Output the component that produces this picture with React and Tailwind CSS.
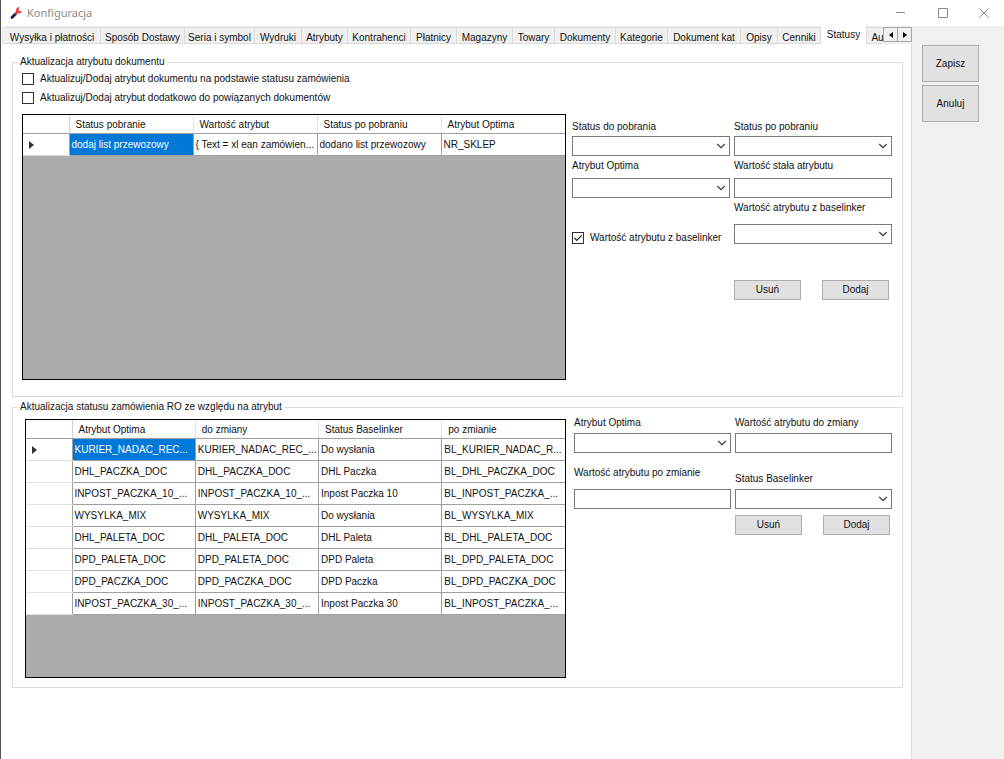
import { useState } from 'react';
import { ChevronDown } from 'lucide-react';

const tabs = [
  { name: 'Wysyłka i płatności', width: 'w-[97px]' },
  { name: 'Sposób Dostawy', width: 'w-[84px]' },
  { name: 'Seria i symbol', width: 'w-[70px]' },
  { name: 'Wydruki', width: 'w-[47px]' },
  { name: 'Atrybuty', width: 'w-[46px]' },
  { name: 'Kontrahenci', width: 'w-[63px]' },
  { name: 'Płatnicy', width: 'w-[46px]' },
  { name: 'Magazyny', width: 'w-[56px]' },
  { name: 'Towary', width: 'w-[42px]' },
  { name: 'Dokumenty', width: 'w-[61px]' },
  { name: 'Kategorie', width: 'w-[52px]' },
  { name: 'Dokument kat', width: 'w-[73px]' },
  { name: 'Opisy', width: 'w-[37px]' },
  { name: 'Cenniki', width: 'w-[43px]' },
  { name: 'Statusy', width: 'w-[46px]' },
  { name: 'Au', width: 'w-[22px]' },
];

const documentColumns = ['Status pobranie', 'Wartość atrybut', 'Status po pobraniu', 'Atrybut Optima'];
const documentRows = [
  ['dodaj list przewozowy', '{ Text = xl ean zamówien...', 'dodano list przewozowy', 'NR_SKLEP'],
];

const orderColumns = ['Atrybut Optima', 'do zmiany', 'Status Baselinker', 'po zmianie'];
const orderRows = [
  ['KURIER_NADAC_REC...', 'KURIER_NADAC_REC_...', 'Do wysłania', 'BL_KURIER_NADAC_R...'],
  ['DHL_PACZKA_DOC', 'DHL_PACZKA_DOC', 'DHL Paczka', 'BL_DHL_PACZKA_DOC'],
  ['INPOST_PACZKA_10_...', 'INPOST_PACZKA_10_...', 'Inpost Paczka 10', 'BL_INPOST_PACZKA_...'],
  ['WYSYLKA_MIX', 'WYSYLKA_MIX', 'Do wysłania', 'BL_WYSYLKA_MIX'],
  ['DHL_PALETA_DOC', 'DHL_PALETA_DOC', 'DHL Paleta', 'BL_DHL_PALETA_DOC'],
  ['DPD_PALETA_DOC', 'DPD_PALETA_DOC', 'DPD Paleta', 'BL_DPD_PALETA_DOC'],
  ['DPD_PACZKA_DOC', 'DPD_PACZKA_DOC', 'DPD Paczka', 'BL_DPD_PACZKA_DOC'],
  ['INPOST_PACZKA_30_...', 'INPOST_PACZKA_30_...', 'Inpost Paczka 30', 'BL_INPOST_PACZKA_...'],
];

function TitleBar() {
  return (
    <header className="flex h-[26px] items-center bg-white pl-2">
      <svg viewBox="0 0 14 14" className="h-3.5 w-3.5" fill="none">
        <path d="M3 11.4 L6.4 8" stroke="#1d1b4c" strokeWidth="2.8" strokeLinecap="round" />
        <path d="M6 8.4 L9 5.4" stroke="#d8232f" strokeWidth="2" />
        <path d="M10.8 1.6 A3 3 0 1 0 12.8 5 L10.8 5.2 L9.4 3.6 Z" fill="#e2434d" />
      </svg>
      <h1 className="ml-1 flex-1 font-['Noto_Sans',sans-serif] text-[11px] leading-4 text-[#8c8c8c]">Konfiguracja</h1>
      <button type="button" aria-label="Minimalizuj" className="flex h-6 w-[42px] items-center justify-center">
        <svg viewBox="0 0 10 10" className="h-2.5 w-2.5" stroke="#888">
          <path d="M0 4.5 H9" />
        </svg>
      </button>
      <button type="button" aria-label="Maksymalizuj" className="flex h-6 w-[42px] items-center justify-center">
        <svg viewBox="0 0 10 10" className="h-2.5 w-2.5" stroke="#888" fill="none">
          <path d="M.5 .5 H9.5 V9.5 H.5 Z" />
        </svg>
      </button>
      <button type="button" aria-label="Zamknij" className="flex h-6 w-[40px] items-center justify-center">
        <svg viewBox="0 0 10 10" className="h-2.5 w-2.5" stroke="#888">
          <path d="M.5 .5 L9.5 9.5 M9.5 .5 L.5 9.5" />
        </svg>
      </button>
    </header>
  );
}

function TabStrip({ active, onSelect }) {
  return (
    <div className="flex h-[18px] items-end bg-[#f0f0f0]">
      <div role="tablist" className="flex h-[18px] min-w-0 flex-1 items-end overflow-hidden pl-[3px]">
        {tabs.map((tab) => (
          <button
            key={tab.name}
            type="button"
            role="tab"
            aria-selected={tab.name === active}
            onClick={() => onSelect(tab.name)}
            className={`shrink-0 whitespace-nowrap border-r border-[#dadada] ${tab.width} ${
              tab.name === active ? 'h-[18px] bg-white' : 'h-[17px] border-y bg-[#f0f0f0] pt-0.5'
            }`}
          >
            {tab.name}
          </button>
        ))}
      </div>
      <div className="flex h-[17px] items-start">
        <button type="button" aria-label="Poprzednie karty" className="flex h-[15px] w-[15px] items-center justify-center border border-[#a5a5a5] bg-[#f0f0f0]">
          <svg viewBox="0 0 4 6" className="h-1.5 w-1"><path d="M4 0 V6 L0 3 Z" /></svg>
        </button>
        <button type="button" aria-label="Następne karty" className="flex h-[15px] w-[14px] items-center justify-center border border-l-0 border-[#a5a5a5] bg-[#f0f0f0]">
          <svg viewBox="0 0 4 6" className="h-1.5 w-1"><path d="M0 0 V6 L4 3 Z" /></svg>
        </button>
      </div>
    </div>
  );
}

function CheckBox({ label, checked, onChange }) {
  return (
    <label className="flex h-3 items-center gap-1.5 whitespace-nowrap">
      <span className="grid">
        <input
          type="checkbox"
          checked={checked}
          onChange={(e) => onChange(e.target.checked)}
          className="peer col-start-1 row-start-1 h-3 w-3 appearance-none border border-[#333] bg-white"
        />
        <svg viewBox="0 0 12 12" fill="none" stroke="#222" strokeWidth="1.2" className="pointer-events-none invisible col-start-1 row-start-1 h-3 w-3 peer-checked:visible">
          <path d="M2.5 6 L4.8 8.4 L9.6 3.4" />
        </svg>
      </span>
      {label}
    </label>
  );
}

function SelectField({ id, label, gap = 'gap-1' }) {
  return (
    <div className={`flex flex-col ${gap}`}>
      <label htmlFor={id} className="whitespace-nowrap">{label}</label>
      <div className="relative">
        <select id={id} className="block h-5 w-full appearance-none border border-[#7a7a7a] bg-white px-1">
          <option value=""></option>
        </select>
        <ChevronDown size={14} strokeWidth={2} className="pointer-events-none absolute right-0.5 top-[3px] text-[#444]" />
      </div>
    </div>
  );
}

function TextField({ id, label, gap = 'gap-1' }) {
  return (
    <div className={`flex flex-col ${gap}`}>
      <label htmlFor={id} className="whitespace-nowrap">{label}</label>
      <input id={id} type="text" className="block h-5 w-full border border-[#7a7a7a] bg-white px-1" />
    </div>
  );
}

function FormButtons() {
  return (
    <div className="flex gap-[21px]">
      <button type="button" className="h-5 w-[67px] border border-[#adadad] bg-[#e1e1e1]">Usuń</button>
      <button type="button" className="h-5 w-[67px] border border-[#adadad] bg-[#e1e1e1]">Dodaj</button>
    </div>
  );
}

function DataGrid({ columns, rows, height }) {
  return (
    <div className={`min-w-0 flex-1 border border-black bg-[#ababab] ${height}`}>
      <table className="w-full table-fixed border-collapse bg-white">
        <thead>
          <tr className="h-[18px]">
            <th className="w-[46px] border-b border-r border-b-[#a0a0a0] border-r-[#d0d0d0]"></th>
            {columns.map((column) => (
              <th key={column} className="overflow-hidden whitespace-nowrap border-b border-r border-b-[#a0a0a0] border-r-[#e0e0e0] pl-1.5 pt-0.5 text-left font-normal last:border-r-0">
                {column}
              </th>
            ))}
          </tr>
        </thead>
        <tbody>
          {rows.map((row, i) => (
            <tr key={row[0]} className="h-[22px]">
              <td className="border-b border-r border-b-[#e0e0e0] border-r-[#a0a0a0] pl-1.5">
                {i === 0 && (
                  <svg viewBox="0 0 5 8" className="h-2 w-[5px]" fill="#333"><path d="M0 0 L5 4 L0 8 Z" /></svg>
                )}
              </td>
              {row.map((cell, j) => (
                <td
                  key={j}
                  className={`overflow-hidden whitespace-nowrap border-b border-r border-[#a0a0a0] pl-0.5 last:border-r-0 ${
                    i === 0 && j === 0 ? 'bg-[#0078d7] text-white' : ''
                  }`}
                >
                  {cell}
                </td>
              ))}
            </tr>
          ))}
        </tbody>
      </table>
    </div>
  );
}

function DocumentGroup() {
  const [byStatus, setByStatus] = useState(false);
  const [related, setRelated] = useState(false);
  const [fromBaselinker, setFromBaselinker] = useState(true);

  return (
    <fieldset className="border border-[#dcdcdc] pb-4 pl-[9px] pr-2.5">
      <legend className="-ml-1 px-0.5">Aktualizacja atrybutu dokumentu</legend>
      <div className="flex flex-col gap-[7px] pt-[3px]">
        <CheckBox label="Aktualizuj/Dodaj atrybut dokumentu na podstawie statusu zamówienia" checked={byStatus} onChange={setByStatus} />
        <CheckBox label="Aktualizuj/Dodaj atrybut dodatkowo do powiązanych dokumentów" checked={related} onChange={setRelated} />
      </div>
      <div className="mt-2.5 flex gap-1.5">
        <DataGrid columns={documentColumns} rows={documentRows} height="min-h-[266px]" />
        <div className="grid w-80 shrink-0 grid-cols-2 content-start gap-x-1 gap-y-0.5 pt-[5px]">
          <SelectField id="status-from" label="Status do pobrania" gap="gap-px" />
          <SelectField id="status-after" label="Status po pobraniu" gap="gap-px" />
          <SelectField id="doc-attribute" label="Atrybut Optima" />
          <TextField id="fixed-value" label="Wartość stała atrybutu" />
          <div className="flex items-end">
            <CheckBox label="Wartość atrybutu z baselinker" checked={fromBaselinker} onChange={setFromBaselinker} />
          </div>
          <SelectField id="baselinker-value" label="Wartość atrybutu z baselinker" gap="gap-2" />
          <div className="col-start-2 pt-[34px]">
            <FormButtons />
          </div>
        </div>
      </div>
    </fieldset>
  );
}

function OrderGroup() {
  return (
    <fieldset className="mt-0.5 border border-[#dcdcdc] pb-[9px] pl-3 pr-2.5">
      <legend className="-ml-[7px] px-0.5">Aktualizacja statusu zamówienia RO ze względu na atrybut</legend>
      <div className="mt-1 flex gap-2">
        <DataGrid columns={orderColumns} rows={orderRows} height="min-h-[259px]" />
        <div className="-mt-1 grid w-[318px] shrink-0 grid-cols-2 content-start items-end gap-x-1">
          <SelectField id="order-attribute" label="Atrybut Optima" gap="gap-0.5" />
          <TextField id="value-before" label="Wartość atrybutu do zmiany" gap="gap-0.5" />
          <div className="pt-3">
            <TextField id="value-after" label="Wartość atrybutu po zmianie" gap="gap-2" />
          </div>
          <SelectField id="order-status" label="Status Baselinker" gap="gap-0.5" />
          <div className="col-start-2 pt-1.5">
            <FormButtons />
          </div>
        </div>
      </div>
    </fieldset>
  );
}

export default function App() {
  const [activeTab, setActiveTab] = useState('Statusy');

  return (
    <div className="flex min-h-screen flex-col border-l border-[#555] bg-[#f0f0f0] font-['Liberation_Sans',sans-serif] text-[10px] leading-4 text-[#111]">
      <TitleBar />
      <div className="flex flex-1">
        <main className="flex min-w-0 flex-1 flex-col">
          <TabStrip active={activeTab} onSelect={setActiveTab} />
          <div role="tabpanel" className="flex-1 border-r border-[#dcdcdc] bg-white pb-4 pl-[11px] pr-2 pt-2.5">
            <DocumentGroup />
            <OrderGroup />
          </div>
        </main>
        <aside className="flex w-[92px] shrink-0 flex-col gap-[3px] pl-2.5 pt-[19px]">
          <button type="button" className="h-[37px] w-[57px] border border-[#adadad] bg-[#e1e1e1]">Zapisz</button>
          <button type="button" className="h-[37px] w-[57px] border border-[#adadad] bg-[#e1e1e1]">Anuluj</button>
        </aside>
      </div>
    </div>
  );
}
